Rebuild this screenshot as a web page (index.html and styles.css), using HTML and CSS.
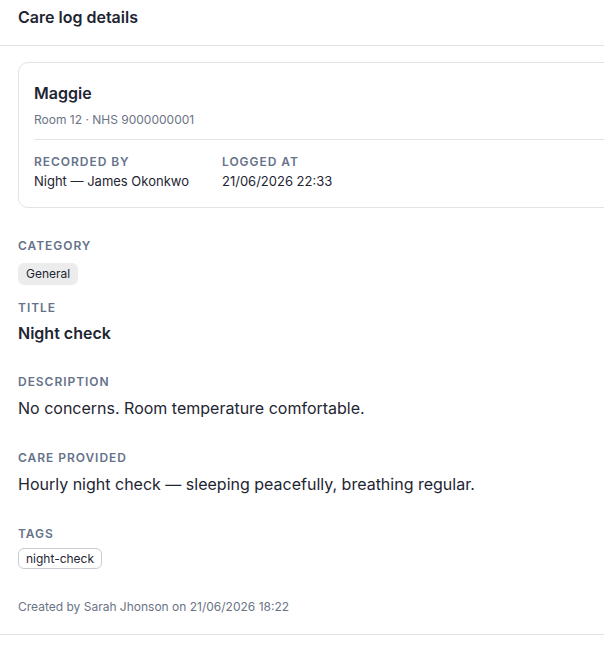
FILE: index.html
```html
<!DOCTYPE html>
<html lang="en-gb">
  <head>
    <meta charset="utf-8" />
    <title>Care log details</title>
    <link rel="stylesheet" href="styles.css">
  </head>

  <body>
    <div class="sheet">
      <header class="sheet-header">
        <h2>Care log details</h2>
      </header>

      <div class="sheet-body">
        <div class="resident-card">
          <h3 class="resident-name">Maggie</h3>
          <p class="resident-meta">Room 12 · NHS 9000000001</p>
          <div class="card-facts">
            <div class="fact">
              <span class="label">Recorded by</span>
              <span class="fact-value">Night — James Okonkwo</span>
            </div>
            <div class="fact">
              <span class="label">Logged at</span>
              <span class="fact-value">21/06/2026 22:33</span>
            </div>
          </div>
        </div>

        <div class="field field-tight">
          <span class="label">Category</span>
          <span class="badge">General</span>
        </div>

        <div class="field">
          <span class="label">Title</span>
          <p class="title-value">Night check</p>
        </div>

        <div class="field">
          <span class="label">Description</span>
          <p class="text-value">No concerns. Room temperature comfortable.</p>
        </div>

        <div class="field">
          <span class="label">Care provided</span>
          <p class="text-value">Hourly night check — sleeping peacefully, breathing regular.</p>
        </div>

        <div class="field">
          <span class="label">Tags</span>
          <div class="tags">
            <span class="tag">night-check</span>
          </div>
        </div>

        <p class="created">Created by Sarah Jhonson on 21/06/2026 18:22</p>
      </div>
    </div>
  </body>
</html>
```

FILE: styles.css
```css
html {
  font-family: "Inter", "Noto Sans", sans-serif;
  color: #1e2533;
}

body {
  margin: 0;
  background: #fff;
  overflow: hidden;
}

p,
h2,
h3 {
  margin: 0;
}

.sheet {
  width: 660px;
}

.sheet-header {
  height: 46px;
  padding: 0 18px;
  border-bottom: 1px solid #e3e3e6;
  box-sizing: border-box;
}

.sheet-header h2 {
  font-size: 16px;
  font-weight: 600;
  line-height: 34px;
  color: #1e2533;
}

.sheet-body {
  padding: 16px 18px 19px;
  border-bottom: 1px solid #e3e3e6;
}

.resident-card {
  border: 1px solid #e3e3e6;
  border-radius: 10px;
  padding: 19px 15px 17px;
  margin-bottom: 30px;
}

.resident-name {
  font-size: 16px;
  font-weight: 600;
  line-height: 22px;
}

.resident-meta {
  margin-top: 8px;
  font-size: 12px;
  line-height: 16px;
  color: #6b7385;
}

.card-facts {
  display: grid;
  grid-template-columns: 188px 188px;
  margin-top: 11px;
  padding-top: 14px;
  border-top: 1px solid #e3e3e6;
}

.fact {
  display: flex;
  flex-direction: column;
  gap: 2px;
}

.fact-value {
  font-size: 13px;
  line-height: 18px;
}

.label {
  display: block;
  font-size: 12px;
  font-weight: 600;
  line-height: 16px;
  letter-spacing: 0.08em;
  text-transform: uppercase;
  color: #66728a;
}

.field {
  margin-bottom: 30px;
}

.field-tight {
  margin-bottom: 15px;
}

.field .label {
  margin-bottom: 6px;
}

.badge {
  display: inline-block;
  margin-top: 3px;
  padding: 3px 8px;
  font-size: 12px;
  line-height: 16px;
  border-radius: 6px;
  background-color: #ececec;
}

.title-value {
  font-size: 16px;
  font-weight: 600;
  line-height: 22px;
}

.text-value {
  font-size: 16px;
  line-height: 24px;
}

.tags {
  display: flex;
  gap: 6px;
}

.tag {
  padding: 1px 7px;
  font-size: 12px;
  line-height: 17px;
  border: 1px solid #c9ccd2;
  border-radius: 6px;
}

.created {
  font-size: 12px;
  line-height: 16px;
  color: #6b7385;
}
```
